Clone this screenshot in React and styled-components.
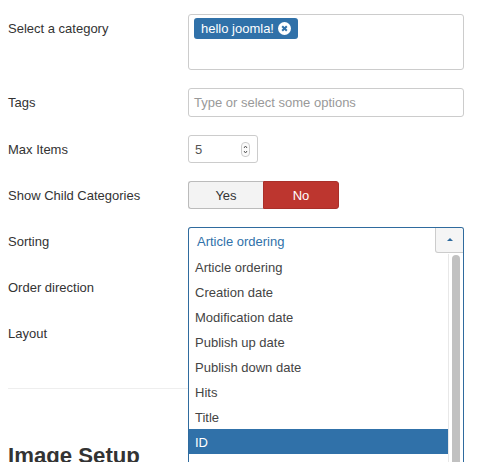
import React from "react";
import styled, { createGlobalStyle } from "styled-components";

const GlobalStyle = createGlobalStyle`
    html, body {
        margin: 0;
        padding: 0;
        height: 462px;
        overflow: hidden;
        background: #fff;
    }
    body {
        font-family: "Liberation Sans", Arial, sans-serif;
        font-size: 13px;
        color: #333;
    }
`;

const Page = styled.div`
    padding: 14px 33px 0 8px;
`;

const Row = styled.div`
    display: grid;
    grid-template-columns: 180px 276px;
    margin-bottom: 18px;
    align-items: start;
`;

const Label = styled.label`
    line-height: 30px;
    height: 28px;
    color: #333;
`;

const Field = styled.div`
    position: relative;
`;

const Box = styled.div`
    box-sizing: border-box;
    border: 1px solid #ccc;
    border-radius: 3px;
    background: #fff;
    height: ${(p) => p.$height || 29}px;
    width: ${(p) => p.$width || 276}px;
    padding: ${(p) => p.$padding || "0 6px 0 5px"};
    display: flex;
    align-items: ${(p) => p.$align || "center"};
    justify-content: space-between;
`;

const Tag = styled.span`
    display: inline-flex;
    align-items: center;
    gap: 4px;
    height: 21px;
    padding: 0 7px;
    border-radius: 3px;
    background: #3071a9;
    color: #fff;
`;

const Placeholder = styled.span`
    color: #999;
`;

const Value = styled.span`
    color: #555;
    padding-left: 1px;
`;

const Toggle = styled.div`
    display: flex;
    width: 151px;
    height: 28px;
`;

const ToggleButton = styled.button`
    flex: 1;
    box-sizing: border-box;
    font: inherit;
    padding: 0;
    border: 1px solid ${(p) => (p.$active ? "#a9302a" : "#bbb")};
    border-radius: ${(p) => (p.$first ? "3px 0 0 3px" : "0 3px 3px 0")};
    border-right-width: ${(p) => (p.$first ? 0 : 1)}px;
    background: ${(p) => (p.$active ? "#bd362f" : "#f3f3f3")};
    color: ${(p) => (p.$active ? "#fff" : "#333")};
`;

const Select = styled.div`
    position: absolute;
    z-index: 2;
    top: 0;
    left: 0;
    width: 276px;
    height: 238px;
    box-sizing: border-box;
    border: 1px solid #2f6b9e;
    border-bottom: 0;
    border-radius: 3px 3px 0 0;
    background: #fff;
    overflow: hidden;
`;

const SelectHead = styled.div`
    display: flex;
    justify-content: space-between;
    height: 26px;
`;

const SelectValue = styled.span`
    color: #3071a9;
    line-height: 28px;
    padding-left: 8px;
`;

const ArrowBox = styled.span`
    box-sizing: border-box;
    width: 29px;
    height: 26px;
    margin: -1px -1px 0 0;
    background: #f5f5f5;
    border: 1px solid #ccc;
    border-top: 0;
    border-radius: 0 3px 0 3px;
    display: flex;
    align-items: center;
    justify-content: center;

    &::after {
        content: "";
        border: 3px solid transparent;
        border-top: 0;
        border-bottom: 3px solid #2f6b9e;
    }
`;

const ListArea = styled.div`
    display: grid;
    grid-template-columns: 259px 15px;
`;

const Options = styled.ul`
    list-style: none;
    margin: 0;
    padding: 0;
`;

const Option = styled.li`
    height: 25px;
    line-height: 27px;
    padding-left: 6px;
    background: ${(p) => (p.$selected ? "#3071a9" : "#fff")};
    color: ${(p) => (p.$selected ? "#fff" : "#444")};
`;

const ScrollTrack = styled.div`
    background: #fff;
    border-left: 1px solid #e8e8e8;
    padding: 1px 2px 0 3px;
`;

const ScrollThumb = styled.div`
    width: 8px;
    height: 240px;
    border-radius: 4px;
    background: #c1c1c1;
`;

const Divider = styled.hr`
    border: 0;
    border-top: 1px solid #eee;
    margin: 41px 0 0;
    width: 456px;
`;

const Heading = styled.h2`
    margin: 54px 0 0;
    font-size: 22.2px;
    line-height: 26px;
    font-weight: 700;
    color: #333;
`;

const options = [
    "Article ordering",
    "Creation date",
    "Modification date",
    "Publish up date",
    "Publish down date",
    "Hits",
    "Title",
    "ID",
    "Ordering",
];

const App = () => {
    return (
        <>
            <GlobalStyle />
            <Page>
                <Row>
                    <Label>Select a category</Label>
                    <Box $height={56} $padding="3px 5px" $align="flex-start">
                        <Tag>
                            hello joomla!
                            <svg width="13" height="13" viewBox="0 0 13 13">
                                <circle cx="6.5" cy="6.5" r="6.5" fill="#fff" />
                                <path d="M4.2 4.2l4.6 4.6M8.8 4.2l-4.6 4.6" stroke="#3071a9" strokeWidth="2" />
                            </svg>
                        </Tag>
                    </Box>
                </Row>
                <Row>
                    <Label>Tags</Label>
                    <Box>
                        <Placeholder>Type or select some options</Placeholder>
                    </Box>
                </Row>
                <Row>
                    <Label>Max Items</Label>
                    <Box $width={70} $height={28}>
                        <Value>5</Value>
                        <svg width="10" height="15" viewBox="0 0 10 15">
                            <rect x="0.5" y="0.5" width="8" height="14" rx="3.5" fill="#fafafa" stroke="#ccc" />
                            <path d="M3 6l1.5-2L6 6M3 9l1.5 2L6 9" fill="none" stroke="#555" />
                        </svg>
                    </Box>
                </Row>
                <Row>
                    <Label>Show Child Categories</Label>
                    <Toggle>
                        <ToggleButton $first>Yes</ToggleButton>
                        <ToggleButton $active>No</ToggleButton>
                    </Toggle>
                </Row>
                <Row>
                    <Label>Sorting</Label>
                    <Field>
                        <Box $height={28} />
                        <Select>
                            <SelectHead>
                                <SelectValue>Article ordering</SelectValue>
                                <ArrowBox />
                            </SelectHead>
                            <ListArea>
                                <Options>
                                    {options.map((name) => (
                                        <Option key={name} $selected={name === "ID"}>
                                            {name}
                                        </Option>
                                    ))}
                                </Options>
                                <ScrollTrack>
                                    <ScrollThumb />
                                </ScrollTrack>
                            </ListArea>
                        </Select>
                    </Field>
                </Row>
                <Row>
                    <Label>Order direction</Label>
                    <Box $height={28} />
                </Row>
                <Row>
                    <Label>Layout</Label>
                    <Box $height={28} />
                </Row>
                <Divider />
                <Heading>Image Setup</Heading>
            </Page>
        </>
    );
};

export default App;
